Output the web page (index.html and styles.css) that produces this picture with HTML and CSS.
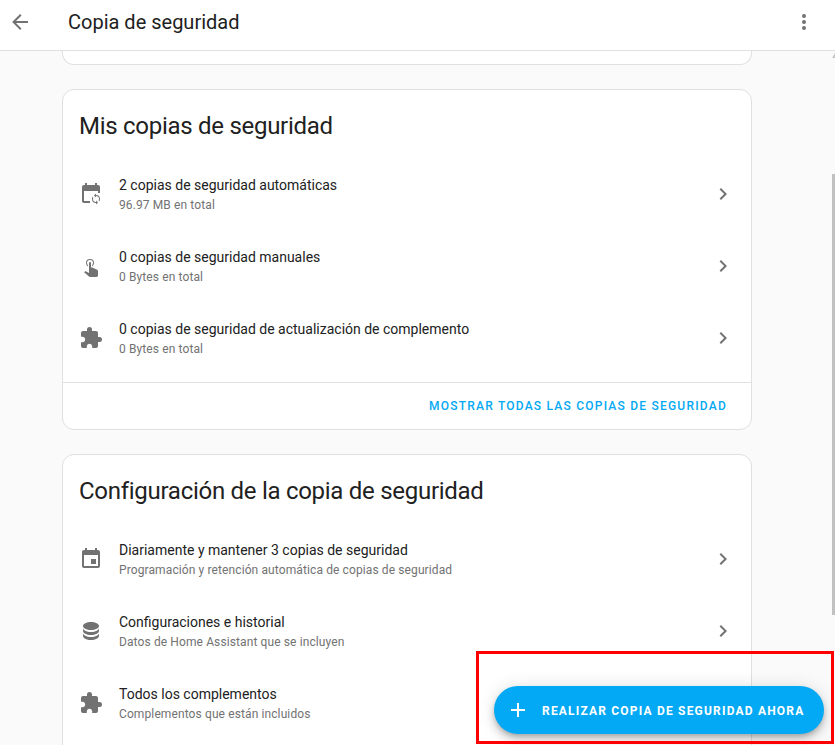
FILE: index.html
```html
<!DOCTYPE html>
<html lang="es">
<head>
<meta charset="utf-8">
<title>Copia de seguridad</title>
<link rel="stylesheet" href="styles.css">
</head>
<body>
<div class="app">
  <header class="topbar">
    <svg class="icon topbar-back" viewBox="0 0 24 24"><path d="M20,11V13H8L13.5,18.5L12.08,19.92L4.16,12L12.08,4.08L13.5,5.5L8,11H20Z"/></svg>
    <div class="topbar-title">Copia de seguridad</div>
    <svg class="icon topbar-menu" viewBox="0 0 24 24"><path d="M12,16A2,2 0 0,1 14,18A2,2 0 0,1 12,20A2,2 0 0,1 10,18A2,2 0 0,1 12,16M12,10A2,2 0 0,1 14,12A2,2 0 0,1 12,14A2,2 0 0,1 10,12A2,2 0 0,1 12,10M12,4A2,2 0 0,1 14,6A2,2 0 0,1 12,8A2,2 0 0,1 10,6A2,2 0 0,1 12,4Z"/></svg>
  </header>
  <div class="body-row">
    <main class="content">
      <div class="card card-stub"></div>

      <section class="card">
        <h2 class="card-title">Mis copias de seguridad</h2>
        <div class="list">
          <div class="row">
            <svg class="icon" viewBox="0 0 24 24"><path d="M6 1V3H5C3.89 3 3 3.9 3 5V19C3 20.1 3.89 21 5 21H11V19H5V9H19V11H21V5C21 3.9 20.1 3 19 3H18V1H16V3H8V1H6Z"/><path transform="translate(11 11) scale(.5)" d="M12,18A6,6 0 0,1 6,12C6,11 6.25,10.03 6.7,9.2L5.24,7.74C4.46,8.97 4,10.43 4,12A8,8 0 0,0 12,20V23L16,19L12,15M12,4V1L8,5L12,9V6A6,6 0 0,1 18,12C18,13 17.75,13.97 17.3,14.8L18.76,16.26C19.54,15.03 20,13.57 20,12A8,8 0 0,0 12,4Z"/></svg>
            <div class="row-text">
              <div class="row-primary">2 copias de seguridad automáticas</div>
              <div class="row-secondary">96.97 MB en total</div>
            </div>
            <svg class="icon" viewBox="0 0 24 24"><path d="M8.59,16.58L13.17,12L8.59,7.41L10,6L16,12L10,18L8.59,16.58Z"/></svg>
          </div>
          <div class="row">
            <svg class="icon" viewBox="0 0 24 24"><path d="M10,9A1,1 0 0,1 11,8A1,1 0 0,1 12,9V13.47L13.21,13.6L18.15,15.79C18.68,16.03 19,16.56 19,17.14V21.5C18.97,22.32 18.32,22.97 17.5,23H11C10.62,23 10.26,22.85 10,22.57L5.1,18.37L5.84,17.6C6.03,17.39 6.3,17.28 6.58,17.28H6.8L10,19V9M11,5A4,4 0 0,1 15,9C15,10.5 14.2,11.77 13,12.46V11.24C13.61,10.69 14,9.89 14,9A3,3 0 0,0 11,6A3,3 0 0,0 8,9C8,9.89 8.39,10.69 9,11.24V12.46C7.8,11.77 7,10.5 7,9A4,4 0 0,1 11,5Z"/></svg>
            <div class="row-text">
              <div class="row-primary">0 copias de seguridad manuales</div>
              <div class="row-secondary">0 Bytes en total</div>
            </div>
            <svg class="icon" viewBox="0 0 24 24"><path d="M8.59,16.58L13.17,12L8.59,7.41L10,6L16,12L10,18L8.59,16.58Z"/></svg>
          </div>
          <div class="row">
            <svg class="icon" viewBox="0 0 24 24"><path d="M20.5,11H19V7C19,5.89 18.1,5 17,5H13V3.5A2.5,2.5 0 0,0 10.5,1A2.5,2.5 0 0,0 8,3.5V5H4A2,2 0 0,0 2,7V10.8H3.5C5,10.8 6.2,12 6.2,13.5C6.2,15 5,16.2 3.5,16.2H2V20A2,2 0 0,0 4,22H7.8V20.5C7.8,19 9,17.8 10.5,17.8C12,17.8 13.2,19 13.2,20.5V22H17A2,2 0 0,0 19,20V16H20.5A2.5,2.5 0 0,0 23,13.5A2.5,2.5 0 0,0 20.5,11Z"/></svg>
            <div class="row-text">
              <div class="row-primary">0 copias de seguridad de actualización de complemento</div>
              <div class="row-secondary">0 Bytes en total</div>
            </div>
            <svg class="icon" viewBox="0 0 24 24"><path d="M8.59,16.58L13.17,12L8.59,7.41L10,6L16,12L10,18L8.59,16.58Z"/></svg>
          </div>
        </div>
        <div class="card-actions">
          <span class="link-button">MOSTRAR TODAS LAS COPIAS DE SEGURIDAD</span>
        </div>
      </section>

      <section class="card card-cut">
        <h2 class="card-title">Configuración de la copia de seguridad</h2>
        <div class="list">
          <div class="row">
            <svg class="icon" viewBox="0 0 24 24"><path d="M19,19H5V8H19M16,1V3H8V1H6V3H5C3.89,3 3,3.89 3,5V19A2,2 0 0,0 5,21H19A2,2 0 0,0 21,19V5C21,3.89 20.1,3 19,3H18V1M17,12H12V17H17V12Z"/></svg>
            <div class="row-text">
              <div class="row-primary">Diariamente y mantener 3 copias de seguridad</div>
              <div class="row-secondary">Programación y retención automática de copias de seguridad</div>
            </div>
            <svg class="icon" viewBox="0 0 24 24"><path d="M8.59,16.58L13.17,12L8.59,7.41L10,6L16,12L10,18L8.59,16.58Z"/></svg>
          </div>
          <div class="row">
            <svg class="icon" viewBox="0 0 24 24"><path d="M12,3C7.58,3 4,4.79 4,7C4,9.21 7.58,11 12,11C16.42,11 20,9.21 20,7C20,4.79 16.42,3 12,3M4,9V12C4,14.21 7.58,16 12,16C16.42,16 20,14.21 20,12V9C20,11.21 16.42,13 12,13C7.58,13 4,11.21 4,9M4,14V17C4,19.21 7.58,21 12,21C16.42,21 20,19.21 20,17V14C20,16.21 16.42,18 12,18C7.58,18 4,16.21 4,14Z"/></svg>
            <div class="row-text">
              <div class="row-primary">Configuraciones e historial</div>
              <div class="row-secondary">Datos de Home Assistant que se incluyen</div>
            </div>
            <svg class="icon" viewBox="0 0 24 24"><path d="M8.59,16.58L13.17,12L8.59,7.41L10,6L16,12L10,18L8.59,16.58Z"/></svg>
          </div>
          <div class="row">
            <svg class="icon" viewBox="0 0 24 24"><path d="M20.5,11H19V7C19,5.89 18.1,5 17,5H13V3.5A2.5,2.5 0 0,0 10.5,1A2.5,2.5 0 0,0 8,3.5V5H4A2,2 0 0,0 2,7V10.8H3.5C5,10.8 6.2,12 6.2,13.5C6.2,15 5,16.2 3.5,16.2H2V20A2,2 0 0,0 4,22H7.8V20.5C7.8,19 9,17.8 10.5,17.8C12,17.8 13.2,19 13.2,20.5V22H17A2,2 0 0,0 19,20V16H20.5A2.5,2.5 0 0,0 23,13.5A2.5,2.5 0 0,0 20.5,11Z"/></svg>
            <div class="row-text">
              <div class="row-primary">Todos los complementos</div>
              <div class="row-secondary">Complementos que están incluidos</div>
            </div>
            <svg class="icon" viewBox="0 0 24 24"><path d="M8.59,16.58L13.17,12L8.59,7.41L10,6L16,12L10,18L8.59,16.58Z"/></svg>
          </div>
        </div>
      </section>
    </main>
    <div class="scrollbar"><span class="scrollbar-arrow"></span><span class="scrollbar-thumb"></span></div>
  </div>
  <button class="fab" type="button">
    <svg class="fab-icon" viewBox="0 0 24 24"><path d="M19,13H13V19H11V13H5V11H11V5H13V11H19V13Z"/></svg>
    <span class="fab-label">REALIZAR COPIA DE SEGURIDAD AHORA</span>
  </button>
  <div class="highlight"></div>
</div>
</body>
</html>
```
FILE: styles.css
```css
* { box-sizing: border-box; }
html, body { margin: 0; height: 100%; overflow: hidden; }
body { font-family: Roboto, "Liberation Sans", sans-serif; color: #212121; background: #fafafa; }
.app { position: relative; display: flex; flex-direction: column; height: 745px; overflow: hidden; }

.topbar { display: flex; align-items: center; flex: none; height: 51px; padding: 0 19px 6px 8px; background: #fff; border-bottom: 1px solid #e0e0e0; }
.topbar-title { flex: 1; margin-left: 36px; font-size: 20px; line-height: 28px; color: #212121; }
.icon { flex: none; width: 24px; height: 24px; fill: #727272; }

.body-row { display: flex; flex: 1; min-height: 0; }
.content { flex: 1; min-width: 0; display: flex; flex-direction: column; gap: 24px; padding-left: 62px; overflow: hidden; }

.card { flex: none; width: 690px; background: #fff; border: 1px solid #e0e0e0; border-radius: 12px; }
.card-stub { height: 14px; border-top: 0; border-radius: 0 0 12px 12px; }
.card-cut { padding-bottom: 48px; }
.card-title { margin: 0; padding: 20px 16px 0; height: 68px; font-size: 24px; font-weight: 400; line-height: 32px; letter-spacing: -.28px; color: #212121; }

.list { padding: 0 0 8px; }
.row { display: flex; align-items: center; height: 72px; padding: 0 16px; gap: 16px; }
.row-text { flex: 1; min-width: 0; padding-top: 2px; }
.row-primary { font-size: 14px; line-height: 20px; color: #212121; }
.row-secondary { font-size: 12px; line-height: 20px; letter-spacing: .11px; color: #727272; }

.card-actions { display: flex; justify-content: flex-end; align-items: center; height: 47px; padding: 0 24px; border-top: 1px solid #e0e0e0; }
.link-button { font-size: 12px; font-weight: 500; letter-spacing: 1.22px; color: #03a9f4; }

.scrollbar { position: relative; flex: none; width: 3px; background: #fafafa; }
.scrollbar-arrow { position: absolute; top: 2px; left: 0; border-left: 3px solid transparent; border-bottom: 5px solid #c8c8c8; }
.scrollbar-thumb { position: absolute; top: 123px; left: 0; width: 3px; height: 441px; background: #c1c1c1; }

.fab { position: absolute; left: 494px; top: 686px; display: flex; align-items: center; width: 330px; height: 48px; padding: 0 20px 0 12px; gap: 12px; border: 0; border-radius: 24px; background: #03a9f4; color: #fff; font-family: inherit; box-shadow: 0 3px 5px -1px rgba(0,0,0,.2), 0 6px 10px 0 rgba(0,0,0,.14), 0 1px 18px 0 rgba(0,0,0,.12); }
.fab-icon { flex: none; width: 24px; height: 24px; fill: #fff; }
.fab-label { padding-top: 2px; font-size: 12px; font-weight: 700; letter-spacing: 1.19px; white-space: nowrap; }

.highlight { position: absolute; left: 476px; top: 651px; width: 358px; height: 93px; border: 3px solid #f00; pointer-events: none; }
```
